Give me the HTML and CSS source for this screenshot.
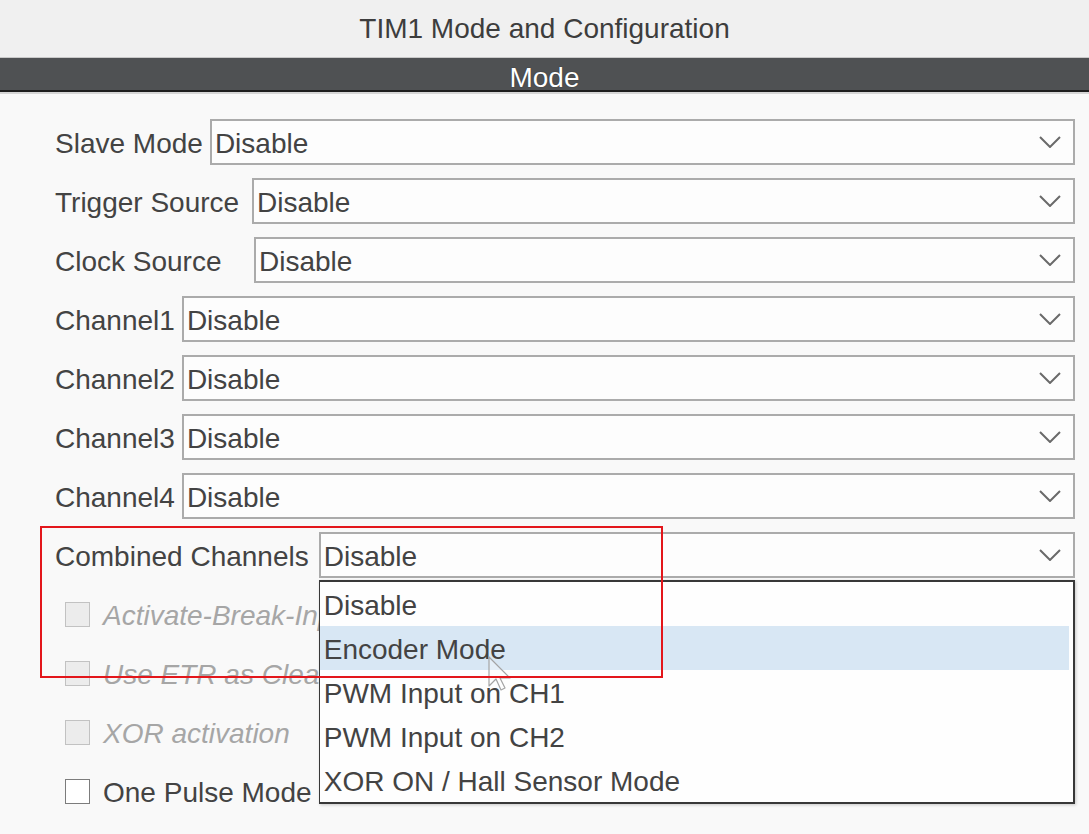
FILE: index.html
```html
<!DOCTYPE html>
<html>
<head>
  <meta charset="UTF-8">
  <meta name="viewport" content="width=device-width, initial-scale=1.0">
  <title>TIM1 Mode and Configuration</title>
  <link rel="stylesheet" href="styles.css">
</head>
<body>

  <div class="title">TIM1 Mode and Configuration</div>
  <div class="section-bar">Mode</div>

  <div class="form">
    <div class="row">
      <span class="label">Slave Mode</span>
      <div class="field">
        <div class="select"><span>Disable</span><svg class="chevron" viewBox="0 0 22 12"><path d="M1 1l10 10 10-10"/></svg></div>
      </div>
    </div>
    <div class="row">
      <span class="label label-trigger">Trigger Source</span>
      <div class="field">
        <div class="select"><span>Disable</span><svg class="chevron" viewBox="0 0 22 12"><path d="M1 1l10 10 10-10"/></svg></div>
      </div>
    </div>
    <div class="row">
      <span class="label label-clock">Clock Source</span>
      <div class="field">
        <div class="select"><span>Disable</span><svg class="chevron" viewBox="0 0 22 12"><path d="M1 1l10 10 10-10"/></svg></div>
      </div>
    </div>
    <div class="row">
      <span class="label">Channel1</span>
      <div class="field">
        <div class="select"><span>Disable</span><svg class="chevron" viewBox="0 0 22 12"><path d="M1 1l10 10 10-10"/></svg></div>
      </div>
    </div>
    <div class="row">
      <span class="label">Channel2</span>
      <div class="field">
        <div class="select"><span>Disable</span><svg class="chevron" viewBox="0 0 22 12"><path d="M1 1l10 10 10-10"/></svg></div>
      </div>
    </div>
    <div class="row">
      <span class="label">Channel3</span>
      <div class="field">
        <div class="select"><span>Disable</span><svg class="chevron" viewBox="0 0 22 12"><path d="M1 1l10 10 10-10"/></svg></div>
      </div>
    </div>
    <div class="row">
      <span class="label">Channel4</span>
      <div class="field">
        <div class="select"><span>Disable</span><svg class="chevron" viewBox="0 0 22 12"><path d="M1 1l10 10 10-10"/></svg></div>
      </div>
    </div>
    <div class="row">
      <span class="label label-combined">Combined Channels</span>
      <div class="field">
        <div class="select"><span>Disable</span><svg class="chevron" viewBox="0 0 22 12"><path d="M1 1l10 10 10-10"/></svg></div>
        <ul class="options">
          <li class="option">Disable</li>
          <li class="option hover">Encoder Mode</li>
          <li class="option">PWM Input on CH1</li>
          <li class="option">PWM Input on CH2</li>
          <li class="option">XOR ON / Hall Sensor Mode</li>
        </ul>
      </div>
    </div>

    <label class="check disabled"><span class="box"></span><span class="text">Activate-Break-Input</span></label>
    <label class="check disabled"><span class="box"></span><span class="text">Use ETR as Clearing Source</span></label>
    <label class="check disabled"><span class="box"></span><span class="text">XOR activation</span></label>
    <label class="check"><span class="box"></span><span class="text">One Pulse Mode</span></label>
  </div>

  <!-- mouse pointer resting on the hovered option -->
  <svg class="pointer" viewBox="0 0 24 36">
    <path d="M1 1v29l7-7 5 11 4-2-5-10h10z"/>
  </svg>

  <div class="callout"></div>

</body>
</html>
```

FILE: styles.css
```css
body {
  margin: 0;
  position: relative;
  height: 834px;
  overflow: hidden;
  font: 28px/1 "Liberation Sans", Arial, sans-serif;
  color: #434343;
  background: #f9f9f9;
}

.title {
  height: 57px;
  display: flex;
  align-items: center;
  justify-content: center;
  color: #3d3d3d;
  background: #f0f0f0;
}

.section-bar {
  height: 35px;
  box-sizing: border-box;
  padding-top: 7px;
  display: flex;
  align-items: center;
  justify-content: center;
  border-top: 1px solid #c9c9c9;
  border-bottom: 2px solid #1e1e1e;
  color: #fff;
  background: #4f5153;
  box-shadow: 0 2px 0 #d6d6d6;
  text-shadow: 0 0 1px #222;
}

.form {
  padding: 27px 14px 0 55px;
  display: flex;
  flex-direction: column;
  gap: 13px;
}

.row {
  height: 46px;
  display: flex;
  align-items: center;
  gap: 7px;
}

  .label {
    flex: 0 0 auto;
    padding-top: 3px;
  }

  .label-trigger {
    width: 190px;
  }

  .label-clock {
    width: 192px;
  }

  .label-combined {
    padding-right: 3px;
  }

.field {
  position: relative;
  flex: 1 1 0%;
  min-width: 0;
}

.select {
  height: 46px;
  box-sizing: border-box;
  display: flex;
  align-items: center;
  justify-content: space-between;
  padding: 3px 12px 0 3px;
  border: 2px solid #ababab;
  background: #fdfdfd;
}

  .chevron {
    width: 22px;
    height: 12px;
    margin-top: -3px;
  }

    .chevron path {
      fill: none;
      stroke: #6a6a6a;
      stroke-width: 2;
    }

.options {
  position: absolute;
  top: 100%;
  left: 0;
  right: 0;
  z-index: 2;
  margin: 2px 0 0;
  padding: 0;
  list-style: none;
  border: 2px solid #383838;
  border-left-width: 1px;
  background: #fefefe;
  box-shadow: 1px 1px 3px rgba(0, 0, 0, 0.2);
}

  .option {
    height: 44px;
    box-sizing: border-box;
    padding: 3px 0 0 4px;
    display: flex;
    align-items: center;
  }

  .option.hover {
    margin-right: 4px;
    background: #d8e7f4;
  }

.check {
  height: 46px;
  display: flex;
  align-items: center;
  gap: 13px;
  padding-left: 10px;
}

  .check .box {
    width: 23px;
    height: 23px;
    border: 1px solid #7c7c7c;
    background: #fff;
  }

  .check .text {
    padding-top: 3px;
  }

  .check.disabled {
    font-style: italic;
    color: #a6a6a6;
  }

    .check.disabled .box {
      border-color: #c2c2c2;
      background: #ececec;
    }

.pointer {
  position: absolute;
  left: 488px;
  top: 656px;
  z-index: 3;
  width: 24px;
  height: 36px;
}

  .pointer path {
    fill: rgba(255, 255, 255, 0.35);
    stroke: #a4a4a4;
    stroke-width: 1.2;
    stroke-linejoin: round;
  }

.callout {
  position: absolute;
  left: 40px;
  top: 526px;
  z-index: 4;
  width: 623px;
  height: 152px;
  box-sizing: border-box;
  border: 2px solid #e3161b;
}
```
